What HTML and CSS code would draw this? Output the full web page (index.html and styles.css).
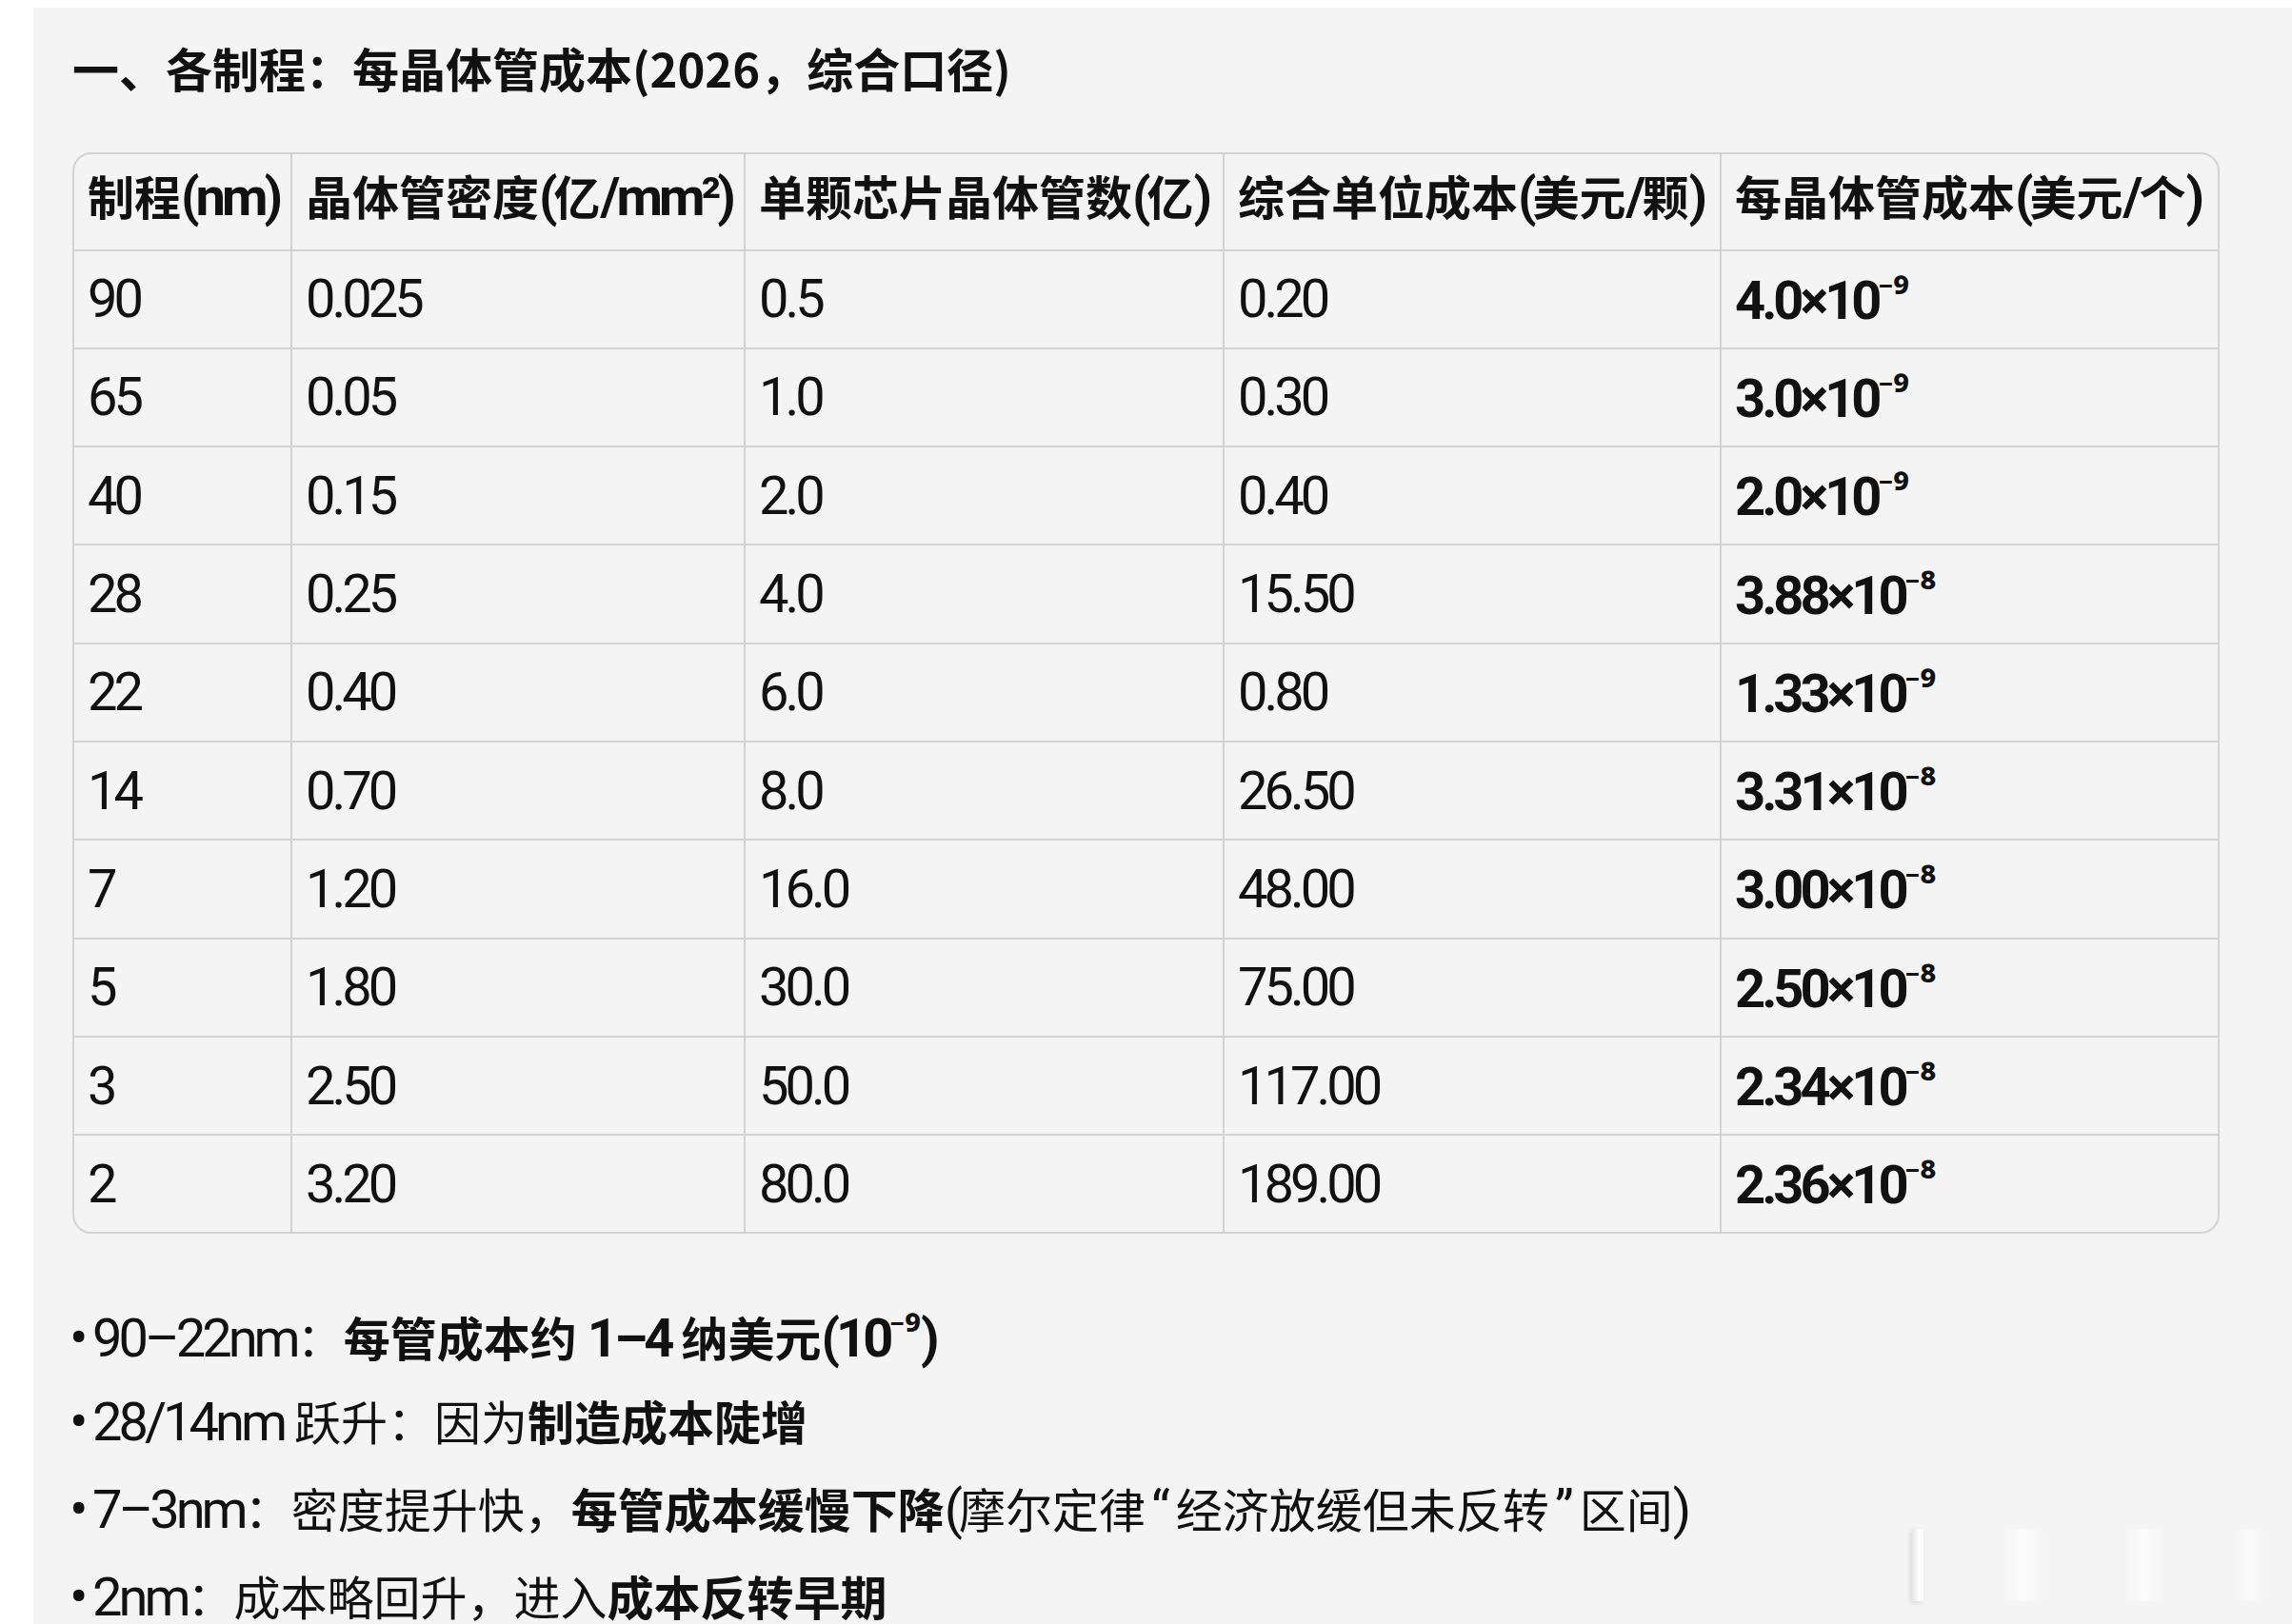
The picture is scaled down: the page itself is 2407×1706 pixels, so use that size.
FILE: index.html
```html
<!DOCTYPE html>
<html lang="zh-CN">
<head>
<meta charset="utf-8">
<title>各制程每晶体管成本</title>
<link rel="stylesheet" href="styles.css">
</head>
<body>
<div class="panel">
  <h1 class="title">一、各制程：每晶体管成本(2026，综合口径)</h1>
  <div class="tbl-wrap">
    <table class="tbl">
      <colgroup>
        <col class="c1"><col class="c2"><col class="c3"><col class="c4"><col class="c5">
      </colgroup>
      <thead>
        <tr>
          <th>制程<span class="lt">(nm)</span></th>
          <th>晶体管密度<span class="lt">(</span>亿<span class="lt">/mm²)</span></th>
          <th>单颗芯片晶体管数<span class="lt">(</span>亿<span class="lt">)</span></th>
          <th>综合单位成本<span class="lt">(</span>美元<span class="lt">/</span>颗<span class="lt">)</span></th>
          <th>每晶体管成本<span class="lt">(</span>美元<span class="lt">/</span>个<span class="lt">)</span></th>
        </tr>
      </thead>
      <tbody>
        <tr><td class="num">90</td><td class="num">0.025</td><td class="num">0.5</td><td class="num">0.20</td><td class="num b">4.0×10<span class="sp">⁻⁹</span></td></tr>
        <tr><td class="num">65</td><td class="num">0.05</td><td class="num">1.0</td><td class="num">0.30</td><td class="num b">3.0×10<span class="sp">⁻⁹</span></td></tr>
        <tr><td class="num">40</td><td class="num">0.15</td><td class="num">2.0</td><td class="num">0.40</td><td class="num b">2.0×10<span class="sp">⁻⁹</span></td></tr>
        <tr><td class="num">28</td><td class="num">0.25</td><td class="num">4.0</td><td class="num">15.50</td><td class="num b">3.88×10<span class="sp">⁻⁸</span></td></tr>
        <tr><td class="num">22</td><td class="num">0.40</td><td class="num">6.0</td><td class="num">0.80</td><td class="num b">1.33×10<span class="sp">⁻⁹</span></td></tr>
        <tr><td class="num">14</td><td class="num">0.70</td><td class="num">8.0</td><td class="num">26.50</td><td class="num b">3.31×10<span class="sp">⁻⁸</span></td></tr>
        <tr><td class="num">7</td><td class="num">1.20</td><td class="num">16.0</td><td class="num">48.00</td><td class="num b">3.00×10<span class="sp">⁻⁸</span></td></tr>
        <tr><td class="num">5</td><td class="num">1.80</td><td class="num">30.0</td><td class="num">75.00</td><td class="num b">2.50×10<span class="sp">⁻⁸</span></td></tr>
        <tr><td class="num">3</td><td class="num">2.50</td><td class="num">50.0</td><td class="num">117.00</td><td class="num b">2.34×10<span class="sp">⁻⁸</span></td></tr>
        <tr><td class="num">2</td><td class="num">3.20</td><td class="num">80.0</td><td class="num">189.00</td><td class="num b">2.36×10<span class="sp">⁻⁸</span></td></tr>
      </tbody>
    </table>
  </div>
  <div class="notes">
    <p class="note"><span class="dot">•</span><span class="lt">90–22nm</span>：<b>每管成本约 <span class="lt">1–4</span> 纳美元<span class="lt">(10<span class="sp">⁻⁹</span>)</span></b></p>
    <p class="note"><span class="dot">•</span><span class="lt">28/14nm</span> 跃升：因为<b>制造成本陡增</b></p>
    <p class="note"><span class="dot">•</span><span class="lt">7–3nm</span>：密度提升快，<b>每管成本缓慢下降</b><span class="lt">(</span>摩尔定律<span class="q">“</span>经济放缓但未反转<span class="q">”</span>区间<span class="lt">)</span></p>
    <p class="note"><span class="dot">•</span><span class="lt">2nm</span>：成本略回升，进入<b>成本反转早期</b></p>
  </div>
  <div class="ghost">
    <i class="g1"></i><i class="g2"></i><i class="g3"></i><i class="g4"></i>
  </div>
</div>
</body>
</html>
```
FILE: styles.css
```css
html, body {
  margin: 0;
  height: 100%;
  overflow: hidden;
  background: #ffffff;
}
body {
  font-family: "Noto Sans CJK SC", "Noto Sans", sans-serif;
  color: #111111;
}
.panel {
  position: relative;
  margin: 8px 0 0 35px;
  height: calc(100vh - 8px);
  box-sizing: border-box;
  padding: 28px 0 0 41px;
  background: #f4f4f4;
}
.title {
  margin: 0 0 54px;
  font-size: 49px;
  font-weight: 700;
  line-height: 70px;
}
.tbl-wrap {
  width: 2255px;
  box-sizing: border-box;
  border: 2px solid #d3d3d3;
  border-radius: 20px;
  overflow: hidden;
}
.tbl {
  width: 100%;
  table-layout: fixed;
  border-collapse: separate;
  border-spacing: 0;
  font-size: 49px;
}
.c1 { width: 229px; }
.c2 { width: 476px; }
.c3 { width: 503px; }
.c4 { width: 522px; }
.c5 { width: 521px; }
.tbl th, .tbl td {
  text-align: left;
  vertical-align: middle;
  white-space: nowrap;
  padding: 0 0 0 14px;
  border-right: 2px solid #d3d3d3;
  border-bottom: 2px solid #d3d3d3;
}
.tbl tr > :last-child { border-right: 0; }
.tbl tbody tr:last-child td { border-bottom: 0; }
.tbl th {
  height: 101.5px;
  box-sizing: border-box;
  padding-bottom: 14px;
  font-weight: 700;
}
.tbl td {
  height: 101.3px;
  font-weight: 400;
}
.lt {
  font-family: Roboto, "Noto Sans", sans-serif;
  font-size: 56px;
  letter-spacing: -4px;
}
.q {
  font-family: Roboto, "Noto Sans", sans-serif;
  font-size: 56px;
  letter-spacing: 0;
  margin: 0 6px;
}
.tbl td.num {
  font-family: Roboto, "Noto Sans", sans-serif;
  font-size: 56px;
  letter-spacing: -4px;
}
.tbl td.b { font-weight: 700; }
.sp {
  font-family: "Noto Sans", "DejaVu Sans", sans-serif;
  font-size: 44px;
  letter-spacing: 0;
  vertical-align: 8px;
}
.notes {
  margin-top: 58px;
  font-size: 49px;
  line-height: 92px;
}
.note {
  margin: 0;
  height: 92px;
  white-space: nowrap;
}
.note b { font-weight: 700; }
.dot {
  display: inline-block;
  width: 24px;
  margin-left: -3px;
  font-family: Roboto, sans-serif;
  font-size: 58px;
}
.ghost {
  position: absolute;
  left: 1970px;
  top: 1598px;
  width: 380px;
  height: 76px;
}
.ghost i {
  position: absolute;
  top: 0;
  bottom: 0;
  display: block;
}
.ghost .g1 {
  left: 3px;
  width: 12px;
  background: linear-gradient(to right, #e6e6e6, #ffffff 60%, #fafafa);
  box-shadow: -2px 2px 5px rgba(0, 0, 0, 0.10);
}
.ghost .g2 {
  left: 95px;
  width: 50px;
  background: linear-gradient(to right, rgba(255,255,255,0), rgba(255,255,255,0.7), rgba(255,255,255,0));
}
.ghost .g3 {
  left: 225px;
  width: 45px;
  background: linear-gradient(to right, rgba(255,255,255,0), rgba(255,255,255,0.7), rgba(255,255,255,0));
}
.ghost .g4 {
  left: 340px;
  width: 35px;
  background: linear-gradient(to right, rgba(255,255,255,0), rgba(255,255,255,0.6), rgba(255,255,255,0));
}
```
